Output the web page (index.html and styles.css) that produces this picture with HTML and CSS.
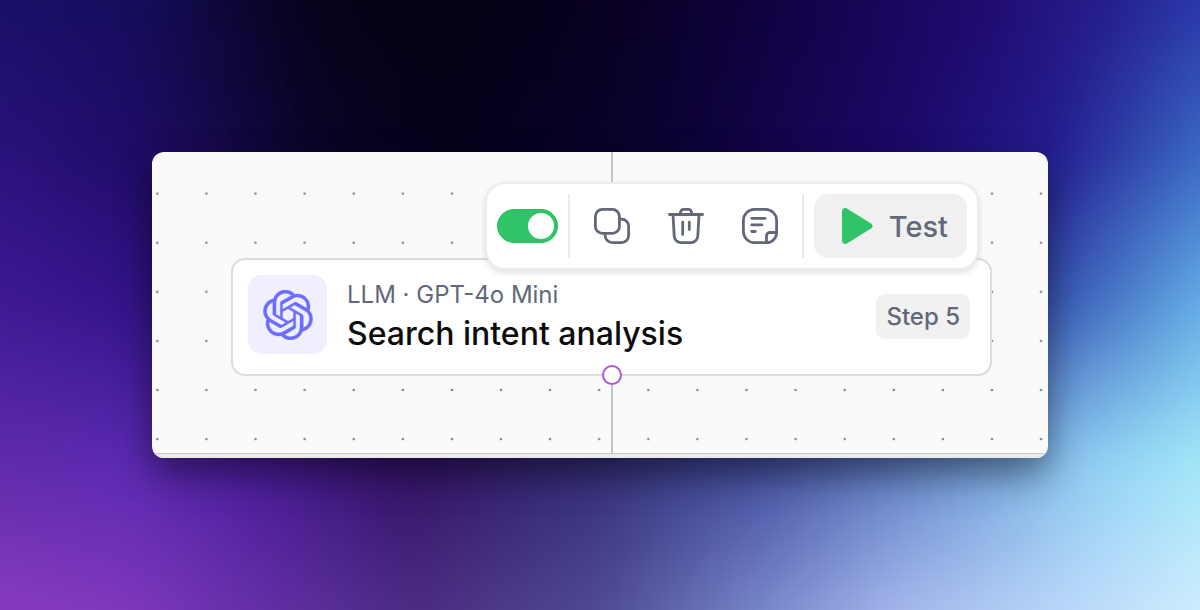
FILE: index.html
```html
<!DOCTYPE html>
<html lang="en">
<head>
<meta charset="utf-8">
<meta name="viewport" content="width=device-width, initial-scale=1">
<title>Workflow step</title>
<link rel="stylesheet" href="styles.css">
</head>
<body>
<div class="backdrop" aria-hidden="true">
  <div class="mesh">
    <div class="band band-1"></div>
    <div class="band band-2"></div>
    <div class="band band-3"></div>
    <div class="band band-4"></div>
    <div class="band band-5"></div>
  </div>
</div>
<main class="panel">
  <svg class="dots" aria-hidden="true">
    <defs>
      <pattern id="dot-grid" width="49.1" height="49.1" patternUnits="userSpaceOnUse" x="-19.2" y="-7.5">
        <circle cx="24.5" cy="49.1" r="1.3" fill="#85868d"/>
        <circle cx="24.5" cy="0" r="1.3" fill="#85868d"/>
      </pattern>
    </defs>
    <rect width="100%" height="100%" fill="url(#dot-grid)"/>
  </svg>
  <div class="flow">
    <div class="connector connector-in"></div>
    <article class="node">
      <div class="tile">
        <svg class="logo" viewBox="0 0 24 24" role="img" aria-label="OpenAI"><path fill="currentColor" stroke="currentColor" stroke-width=".15" d="M22.2819 9.8211a5.9847 5.9847 0 0 0-.5157-4.9108 6.0462 6.0462 0 0 0-6.5098-2.9A6.0651 6.0651 0 0 0 4.9807 4.1818a5.9847 5.9847 0 0 0-3.9977 2.9 6.0462 6.0462 0 0 0 .7427 7.0966 5.98 5.98 0 0 0 .511 4.9107 6.051 6.051 0 0 0 6.5146 2.9001A5.9847 5.9847 0 0 0 13.2599 24a6.0557 6.0557 0 0 0 5.7718-4.2058 5.9894 5.9894 0 0 0 3.9977-2.9001 6.0557 6.0557 0 0 0-.7475-7.0729zm-9.022 12.6081a4.4755 4.4755 0 0 1-2.8764-1.0408l.1419-.0804 4.7783-2.7582a.7948.7948 0 0 0 .3927-.6813v-6.7369l2.02 1.1686a.071.071 0 0 1 .038.052v5.5826a4.504 4.504 0 0 1-4.4945 4.4944zm-9.6607-4.1254a4.4708 4.4708 0 0 1-.5346-3.0137l.142.0852 4.783 2.7582a.7712.7712 0 0 0 .7806 0l5.8428-3.3685v2.3324a.0804.0804 0 0 1-.0332.0615L9.74 19.9502a4.4992 4.4992 0 0 1-6.1408-1.6464zM2.3408 7.8956a4.485 4.485 0 0 1 2.3655-1.9728V11.6a.7664.7664 0 0 0 .3879.6765l5.8144 3.3543-2.0201 1.1685a.0757.0757 0 0 1-.071 0l-4.8303-2.7865A4.504 4.504 0 0 1 2.3408 7.872zm16.5963 3.8558L13.1038 8.364 15.1192 7.2a.0757.0757 0 0 1 .071 0l4.8303 2.7913a4.4944 4.4944 0 0 1-.6765 8.1042v-5.6772a.79.79 0 0 0-.407-.667zm2.0107-3.0231l-.142-.0852-4.7735-2.7818a.7759.7759 0 0 0-.7854 0L9.409 9.2297V6.8974a.0662.0662 0 0 1 .0284-.0615l4.8303-2.7866a4.4992 4.4992 0 0 1 6.6802 4.66zM8.3065 12.863l-2.02-1.1638a.0804.0804 0 0 1-.038-.0567V6.0742a4.4992 4.4992 0 0 1 7.3757-3.4537l-.142.0805L8.704 5.459a.7948.7948 0 0 0-.3927.6813zm1.0976-2.3654l2.602-1.4998 2.6069 1.4998v2.9994l-2.5974 1.4997-2.6067-1.4997Z"/></svg>
      </div>
      <div class="labels">
        <p class="meta">LLM · GPT-4o Mini</p>
        <h1 class="title">Search intent analysis</h1>
      </div>
      <span class="badge">Step 5</span>
      <span class="port"></span>
    </article>
    <div class="connector connector-out"></div>
  </div>
  <div class="ledge"></div>
  <div class="toolbar" role="toolbar" aria-label="Step actions">
    <input class="switch" type="checkbox" role="switch" aria-label="Step enabled" checked>
    <span class="divider"></span>
    <div class="actions">
      <button class="icon-button" type="button" aria-label="Duplicate">
        <svg class="icon" viewBox="0 0 36 36"><rect x="1.4" y="1.4" width="24" height="24" rx="7"/><path d="M25.4 11.2h2.2a7 7 0 0 1 7 7v9.4a7 7 0 0 1-7 7h-9.4a7 7 0 0 1-7-7v-2.2"/></svg>
      </button>
      <button class="icon-button" type="button" aria-label="Delete">
        <svg class="icon" viewBox="0 0 36 36"><path d="M1.4 6.5h33.2M12 6.3l.7-2.600a3.100 3.100 0 0 1 3-2.300h4.600a3.100 3.100 0 0 1 3 2.300l.7 2.600M5 6.700l1.200 21.500a6.800 6.800 0 0 0 6.800 6.400h10a6.800 6.800 0 0 0 6.800-6.400L31 6.700M14.700 14.200v12.400M21.300 14.200v7.300"/></svg>
      </button>
      <button class="icon-button" type="button" aria-label="Add note">
        <svg class="icon" viewBox="0 0 36 36"><path d="M24.5 34.6H12.400a11 11 0 0 1-11-11V12.400a11 11 0 0 1 11-11h11.200a11 11 0 0 1 11 11v12.100c0 5.600-4.500 10.100-10.100 10.100zM24.500 34.600v-6.700a3.400 3.400 0 0 1 3.400-3.400h6.700M9.700 10.300h13.400M9.700 16.900h10.200M9.700 23.500h3.600"/></svg>
      </button>
    </div>
    <span class="divider"></span>
    <button class="test" type="button">
      <svg class="play" viewBox="0 0 31 36" aria-hidden="true"><path fill="currentColor" d="M0 3.200C0 .7 2.700-.8 4.900.5L29 15.400c2 1.200 2 4 0 5.200L4.900 35.500C2.700 36.800 0 35.300 0 32.800z"/></svg>
      <span>Test</span>
    </button>
  </div>
</main>
</body>
</html>
```
FILE: styles.css
```css
* { box-sizing: border-box; }

body {
  margin: 0;
  min-height: 100vh;
  padding: 152px;
  position: relative;
  background: #10033f;
  font-family: Inter, "Liberation Sans", sans-serif;
}

.backdrop {
  position: absolute;
  inset: 0;
  overflow: hidden;
}

/* Colour mesh: each band is a horizontal gradient that fades in from the row above. */
.mesh {
  position: absolute;
  inset: -50px;
  display: grid;
  filter: blur(20px);
}

.band { grid-area: 1 / 1; }

.band-1 {
  background: linear-gradient(90deg, #1a1068 4%, #150d5c 14%, #07031c 27%, #030212 37%, #08011f 50%, #12034a 66%, #200a6e 79%, #262090 90%, #2a3aac 97%);
}

.band-2 {
  background: linear-gradient(90deg, #2a127c 4%, #200c68 14%, #0a0424 29%, #04001a 39%, #0b0230 54%, #1c0868 73%, #241c90 85%, #3c70c8 97%);
  mask-image: linear-gradient(transparent 7%, #000 29%);
}

.band-3 {
  background: linear-gradient(90deg, #3f1a95 4%, #33148a 14%, #1a0850 30%, #0a0230 50%, #1c0868 73%, #3b5fb8 86%, #68b4ea 97%);
  mask-image: linear-gradient(transparent 29%, #000 50%);
}

.band-4 {
  background: linear-gradient(90deg, #5f2bab 4%, #5b2ab2 14%, #4a1c9c 23%, #321064 35%, #342e78 50%, #4450a0 63%, #6a90d0 76%, #90d0f4 88%, #a5eaf8 97%);
  mask-image: linear-gradient(transparent 50%, #000 72%);
}

.band-5 {
  background: linear-gradient(90deg, #8a3cc0 4%, #8038bd 14%, #6230a4 25%, #4c2e84 36%, #504c94 50%, #7888cc 62%, #a8baee 73%, #b8d4f8 84%, #d2edff 97%);
  mask-image: linear-gradient(transparent 72%, #000 94%);
}

.panel {
  position: relative;
  border-radius: 12px;
  background: #fafafa;
  overflow: hidden;
  box-shadow: 0 16px 36px rgba(0, 0, 0, 0.45);
}

.dots {
  position: absolute;
  inset: 0;
  width: 100%;
  height: 100%;
}

.flow {
  position: relative;
  display: flex;
  flex-direction: column;
  align-items: center;
  padding: 0 56px 0 79px;
}

.connector {
  width: 2px;
  background: #c4c5ca;
}

.connector-in { height: 106px; }
.connector-out { height: 77px; }

.node {
  position: relative;
  width: 100%;
  display: flex;
  align-items: flex-start;
  gap: 20px;
  padding: 15px 20px 20px 15px;
  border: 2px solid #dadce1;
  border-radius: 14px;
  background: #fff;
}

.tile {
  display: grid;
  place-items: center;
  width: 79px;
  height: 79px;
  border-radius: 14px;
  background: #f0efff;
  color: #6c6cff;
}

.logo {
  width: 50px;
  height: 50px;
}

.labels { flex: 1; }

.meta {
  margin: 0;
  font-size: 24px;
  line-height: 40px;
  color: #626878;
}

.title {
  margin: 0;
  font-size: 32px;
  font-weight: 500;
  line-height: 38px;
  color: #0c0c0d;
}

.badge {
  align-self: flex-end;
  margin-bottom: 15px;
  padding: 0 10px;
  border-radius: 9px;
  background: #f1f1f1;
  font-size: 24px;
  font-weight: 500;
  line-height: 45px;
  color: #626878;
}

.port {
  position: absolute;
  left: 50%;
  bottom: -11px;
  width: 20px;
  height: 20px;
  border: 2px solid #af52de;
  border-radius: 50%;
  background: #fff;
  transform: translateX(-50%);
}

.ledge {
  position: relative;
  height: 5px;
  border-top: 1px solid #c9c9c9;
  background: #ebebeb;
}

.toolbar {
  position: absolute;
  top: 30px;
  right: 69px;
  display: flex;
  align-items: center;
  gap: 10px;
  padding: 10px;
  border: 2px solid #ececec;
  border-radius: 20px;
  background: #fff;
  box-shadow: 0 3px 6px rgba(0, 0, 0, 0.12);
}

.switch {
  appearance: none;
  width: 61px;
  height: 34px;
  margin: 0;
  padding: 3px;
  border: 1px solid #22c05b;
  border-radius: 17px;
  background: #30c468;
  display: flex;
  justify-content: flex-start;
}

.switch:checked { justify-content: flex-end; }

.switch::before {
  content: "";
  width: 26px;
  height: 26px;
  border-radius: 50%;
  background: #fff;
}

.divider {
  width: 2px;
  height: 64px;
  background: #ebebeb;
}

.actions {
  display: flex;
  gap: 10px;
}

.icon-button {
  display: grid;
  place-items: center;
  width: 64px;
  height: 64px;
  padding: 0;
  border: 0;
  background: none;
  color: #626878;
}

.icon {
  width: 36px;
  height: 36px;
  fill: none;
  stroke: currentColor;
  stroke-width: 2.8;
  stroke-linecap: round;
  stroke-linejoin: round;
}

.test {
  display: flex;
  align-items: center;
  gap: 16px;
  height: 64px;
  padding: 0 19px 0 28px;
  border: 0;
  border-radius: 14px;
  background: #f0f0f0;
  font: 500 29px Inter, "Liberation Sans", sans-serif;
  color: #626878;
}

.play {
  width: 31px;
  height: 36px;
  color: #30c468;
}
```
